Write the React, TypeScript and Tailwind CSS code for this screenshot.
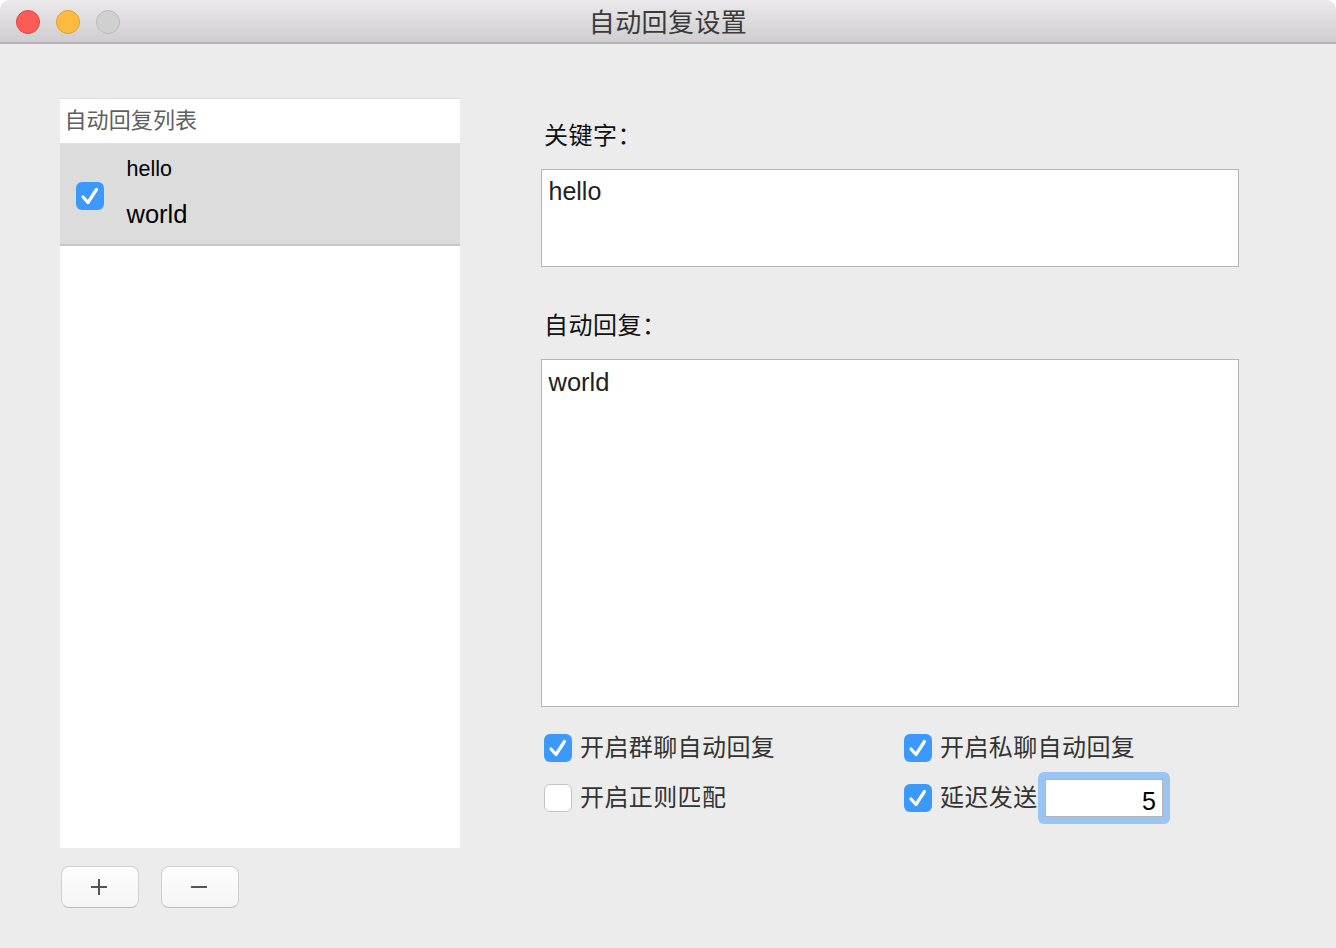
const font = "[font-family:'Liberation_Sans','Noto_Sans_CJK_SC',sans-serif]";

function Check({ checked = true, className = "" }: { checked?: boolean; className?: string }) {
  if (!checked) {
    return <span className={`w-[28px] h-[28px] shrink-0 rounded-[6px] bg-white border border-[#c4c4c4] ${className}`} />;
  }
  return (
    <span className={`w-[28px] h-[28px] shrink-0 rounded-[6px] bg-[#3b99fc] flex items-center justify-center ${className}`}>
      <svg width="28" height="28" viewBox="0 0 28 28" fill="none">
        <path d="M7 15 L12 20.5 L20.5 7.5" stroke="#fff" strokeWidth="3.2" strokeLinecap="round" strokeLinejoin="round" />
      </svg>
    </span>
  );
}

function Option({ label, checked = true }: { label: string; checked?: boolean }) {
  return (
    <div className="flex items-center gap-[8px] h-[28px]">
      <Check checked={checked} />
      <span className="text-[24px] leading-[28px] font-normal text-[#333] tracking-[0.4px] whitespace-nowrap">{label}</span>
    </div>
  );
}

function Btn({ children }: { children: React.ReactNode }) {
  return (
    <div className="w-[78px] h-[42px] rounded-[8px] border border-[#cfcfcf] border-b-[#bdbdbd] bg-gradient-to-b from-[#fdfdfd] to-[#f5f5f5] flex items-center justify-center">
      {children}
    </div>
  );
}

export default function App() {
  return (
    <div className={`${font} w-[1336px] h-[948px] bg-white overflow-hidden`}>
      <div className="w-full h-full bg-[#ececec] rounded-t-[10px] overflow-hidden flex flex-col">
        <div className="relative h-[44px] shrink-0 bg-gradient-to-b from-[#ebe9eb] to-[#cfcdcf] border-b-2 border-[#b5b3b5] flex items-center justify-center">
          <div className="absolute left-[16px] top-[10px] flex gap-[16px]">
            <span className="w-[24px] h-[24px] rounded-full bg-[#fc5b57] border border-[#e0443e]" />
            <span className="w-[24px] h-[24px] rounded-full bg-[#fdbc40] border border-[#dfa023]" />
            <span className="w-[24px] h-[24px] rounded-full bg-[#d0d0d0] border border-[#b9b9b9]" />
          </div>
          <span className="text-[26px] leading-[44px] pt-[4px] tracking-[0.4px] font-normal text-[#3a3a3a]">自动回复设置</span>
        </div>

        <div className="flex flex-1 pl-[60px] pt-[54px]">
          <div className="w-[400px] shrink-0">
            <div className="h-[750px] bg-white border-t border-[#dcdcdc] flex flex-col">
              <div className="h-[45px] pl-[4.5px] pb-[2px] flex items-center text-[22px] tracking-[0.1px] font-normal text-[#5f5f5f] border-b border-[#e0e0e0]">
                自动回复列表
              </div>
              <div className="h-[102px] bg-[#dcdcdc] border-b-2 border-[#c8c8c8] flex items-center pl-[16px]">
                <Check className="mt-[4px]" />
                <div className="ml-[22.5px] mb-[3px] flex flex-col text-black">
                  <span className="text-[21.5px] leading-[26px]">hello</span>
                  <span className="text-[25.5px] leading-[30px] mt-[17px]">world</span>
                </div>
              </div>
            </div>
            <div className="flex gap-[22px] mt-[18px] ml-[1px]">
              <Btn>
                <svg className="relative -left-[1px]" width="18" height="18" viewBox="0 0 18 18"><path d="M9 1 V17 M1 9 H17" stroke="#555" strokeWidth="2" /></svg>
              </Btn>
              <Btn>
                <svg className="relative -left-[1px]" width="18" height="18" viewBox="0 0 18 18"><path d="M1 9 H17" stroke="#555" strokeWidth="2" /></svg>
              </Btn>
            </div>
          </div>

          <div className="ml-[81px] w-[698px] shrink-0 flex flex-col">
            <div className="h-[71px] pl-[3px] pt-[24px] text-[24px] leading-[28px] tracking-[0.5px] text-[#111] font-normal">关键字：</div>
            <div className="h-[98px] bg-white border border-[#b5b5b5] pl-[6.5px] pt-[6px] text-[25px] leading-[30px] text-[#222]">hello</div>
            <div className="h-[92px] pl-[3px] pt-[45px] text-[24px] leading-[28px] tracking-[0.5px] text-[#111] font-normal">自动回复：</div>
            <div className="h-[348px] bg-white border border-[#b5b5b5] pl-[6.5px] pt-[7px] text-[25.5px] leading-[30px] text-[#222]">world</div>
            <div className="grid grid-cols-[360px_1fr] gap-y-[22px] mt-[27px] pl-[3px]">
              <Option label="开启群聊自动回复" />
              <Option label="开启私聊自动回复" />
              <Option label="开启正则匹配" checked={false} />
              <div className="relative flex items-center h-[28px]">
                <Option label="延迟发送" />
                <div className="absolute left-[134px] top-[-12px] w-[132px] h-[52px] rounded-[6px] bg-[#9ac4f2] p-[7px]">
                  <div className="h-full bg-white border border-[#b5b5b5] flex items-center justify-end pr-[6px] text-[25px] text-black">
                    <span className="relative top-[4px]">5</span>
                  </div>
                </div>
              </div>
            </div>
          </div>
        </div>
      </div>
    </div>
  );
}
